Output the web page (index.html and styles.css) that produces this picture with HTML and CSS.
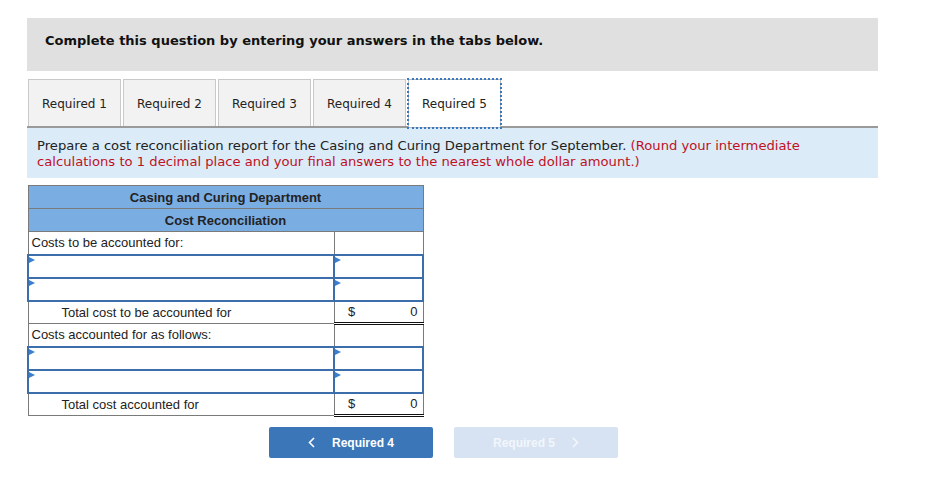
FILE: index.html
```html
<!DOCTYPE html>
<html>
<head>
<meta charset="utf-8">
<link rel="stylesheet" href="styles.css">
</head>
<body>
<div class="page">
  <div class="banner">Complete this question by entering your answers in the tabs below.</div>
  <div class="tabs">
    <div class="tab">Required 1</div>
    <div class="tab">Required 2</div>
    <div class="tab">Required 3</div>
    <div class="tab">Required 4</div>
    <div class="tab active">Required 5</div>
  </div>
  <div class="info">Prepare a cost reconciliation report for the Casing and Curing Department for September. <span class="red">(Round your intermediate calculations to 1 decimal place and your final answers to the nearest whole dollar amount.)</span></div>
  <table class="grid">
    <tr class="head"><td colspan="2">Casing and Curing Department</td></tr>
    <tr class="head"><td colspan="2">Cost Reconciliation</td></tr>
    <tr><td class="label">Costs to be accounted for:</td><td class="amt"></td></tr>
    <tr class="inrow"><td class="inp"><span class="tri"></span></td><td class="inp amtin"><span class="tri"></span></td></tr>
    <tr class="inrow"><td class="inp"><span class="tri"></span></td><td class="inp amtin"><span class="tri"></span></td></tr>
    <tr><td class="label indent">Total cost to be accounted for</td><td class="amt total"><span>$</span><span>0</span></td></tr>
    <tr><td class="label">Costs accounted for as follows:</td><td class="amt"></td></tr>
    <tr class="inrow"><td class="inp"><span class="tri"></span></td><td class="inp amtin"><span class="tri"></span></td></tr>
    <tr class="inrow"><td class="inp"><span class="tri"></span></td><td class="inp amtin"><span class="tri"></span></td></tr>
    <tr><td class="label indent">Total cost accounted for</td><td class="amt total"><span>$</span><span>0</span></td></tr>
  </table>
  <div class="nav">
    <div class="btn prev"><svg class="chev left" width="7" height="11" viewBox="0 0 7 11"><path d="M6 1 L1.5 5.5 L6 10" fill="none" stroke="#fff" stroke-width="1.6"/></svg>Required 4</div>
    <div class="btn next">Required 5<svg class="chev right" width="7" height="11" viewBox="0 0 7 11"><path d="M1 1 L5.5 5.5 L1 10" fill="none" stroke="#f2f6fb" stroke-width="1.6"/></svg></div>
  </div>
</div>
</body>
</html>
```

FILE: styles.css
```css
html, body { margin: 0; padding: 0; background: #fff; }
.page { width: 851px; margin-left: 27px; padding-top: 18px; font-family: "DejaVu Sans", Verdana, sans-serif; }
.banner { height: 53px; box-sizing: border-box; background: #e0e0e0; padding: 15px 0 0 18px; font-weight: bold; font-size: 13px; color: #111; }
.tabs { display: flex; gap: 2px; margin-top: 8px; padding-left: 1px; border-bottom: 2px solid #9a9a9a; height: 47px; }
.tab { width: 93px; box-sizing: border-box; height: 47px; padding-top: 1px; background: #f2f2f2; border: 1px solid #c9c9c9; border-bottom: none; font-size: 12px; color: #222; display: flex; align-items: center; justify-content: center; }
.tab.active { background: #fff; border: 1px solid #bbb; outline: 2px dotted #3a78c2; outline-offset: -1px; height: 49px; margin-bottom: -2px; padding-top: 0; }
.info { background: #dbecf8; padding: 10px 70px 8px 10px; font-size: 13.15px; line-height: 16px; color: #222; }
.red { color: #c0111f; }
.grid { margin-top: 7px; border-collapse: collapse; width: 397px; font-family: "Liberation Sans", Arial, sans-serif; font-size: 13px; color: #222; }
.grid td { border: 1px solid #7a7a7a; height: 23px; padding: 0; box-sizing: border-box; }
.head td { background: #7aade2; text-align: center; font-weight: bold; color: #222; }
.label { padding-left: 3px !important; width: 308px; }
.label.indent { padding-left: 33px !important; }
.amt { width: 89px; }
.total { padding: 0 5px 0 13px !important; border-bottom: 3px double #111 !important; }
.total span { display: inline-block; }
.total span:last-child { float: right; }
.grid td.inp { border: 2px solid #3d6eac; position: relative; vertical-align: top; }
.tri { position: absolute; left: 0; top: 1px; width: 0; height: 0; border-top: 3px solid transparent; border-bottom: 3px solid transparent; border-left: 6px solid #3a7fd0; }
.nav { display: flex; gap: 21px; margin-top: 10px; padding-left: 242px; }
.btn { width: 164px; height: 31px; border-radius: 2px; display: flex; align-items: center; justify-content: center; font-family: "Liberation Sans", Arial, sans-serif; font-weight: bold; font-size: 12px; color: #fff; }
.prev { background: #3b77b8; }
.next { background: #d7e3f2; color: #f2f6fb; }
.chev.left { margin-right: 17px; }
.chev.right { margin-left: 17px; }
```
